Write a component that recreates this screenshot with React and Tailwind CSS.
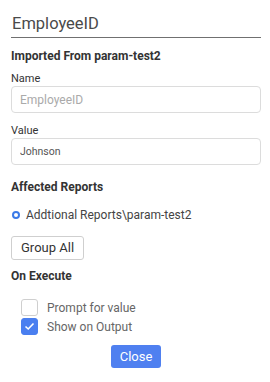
import React, { useState } from 'react';

const Check = () => (
  <svg width="11" height="9" viewBox="0 0 11 9" fill="none">
    <path d="M1.5 4.5 L4.2 7 L9.5 1.5" stroke="white" strokeWidth="1.6" />
  </svg>
);

const Option = ({ checked, onToggle, children }) => (
  <label className="flex items-center h-[17px] gap-[9px] text-[12px] text-[#666] cursor-pointer" onClick={onToggle}>
    <span
      className={`w-[17px] h-[17px] rounded-[3px] border flex items-center justify-center ${
        checked ? 'bg-[#4a7ff0] border-[#4a7ff0]' : 'bg-white border-[#cfcfcf]'
      }`}
    >
      {checked && <Check />}
    </span>
    {children}
  </label>
);

const App = () => {
  const [prompt, setPrompt] = useState(false);
  const [showOutput, setShowOutput] = useState(true);

  return (
    <div className="w-[270px] h-[382px] bg-white pl-[11px] pr-[9px] font-['Roboto',sans-serif]">
      {/* Title */}
      <div className="pt-[14px] pb-[3px] pl-[1px] border-b border-[#707070] text-[16.5px] leading-[20px] text-[#4a4a4a]">
        EmployeeID
      </div>

      <div className="mt-[10px] text-[12px] leading-[16px] font-bold text-[#333]">
        Imported From param-test2
      </div>

      {/* Name */}
      <label className="block mt-[8px] text-[11px] leading-[14px] text-[#333]">Name</label>
      <input
        readOnly
        placeholder="EmployeeID"
        className="block w-full h-[27px] px-[8px] border border-[#dcdcdc] rounded-[4px] text-[12px] text-[#555] placeholder-[#aaa] outline-none"
      />

      {/* Value */}
      <label className="block mt-[11px] text-[11px] leading-[14px] text-[#333]">Value</label>
      <input
        readOnly
        value="Johnson"
        className="block w-full h-[27px] px-[8px] border border-[#dcdcdc] rounded-[4px] text-[10.5px] text-[#555] outline-none"
      />

      <div className="mt-[14px] text-[12px] leading-[16px] font-bold text-[#333]">
        Affected Reports
      </div>

      {/* Report list */}
      <div className="mt-[12px] flex items-center h-[16px] text-[12px] text-[#444]">
        <span className="ml-[1px] mr-[6px] w-[8px] h-[8px] rounded-full border-2 border-[#3b7ae8] bg-white" />
        <span>Addtional Reports\param-test2</span>
      </div>

      <button className="mt-[13px] h-[24px] px-[9px] border border-[#cfcfcf] rounded-[3px] bg-white text-[13px] text-[#333]">
        Group All
      </button>

      <div className="mt-[8px] text-[12px] leading-[16px] font-bold text-[#333]">
        On Execute
      </div>

      {/* Options */}
      <div className="mt-[15px] ml-[10px] flex flex-col gap-[2px]">
        <Option checked={prompt} onToggle={() => setPrompt(!prompt)}>Prompt for value</Option>
        <Option checked={showOutput} onToggle={() => setShowOutput(!showOutput)}>Show on Output</Option>
      </div>

      <div className="mt-[10px] flex justify-center">
        <button className="h-[23px] w-[50px] rounded-[3px] bg-[#4f80f0] text-white text-[13px]">
          Close
        </button>
      </div>
    </div>
  );
};

export default App;
